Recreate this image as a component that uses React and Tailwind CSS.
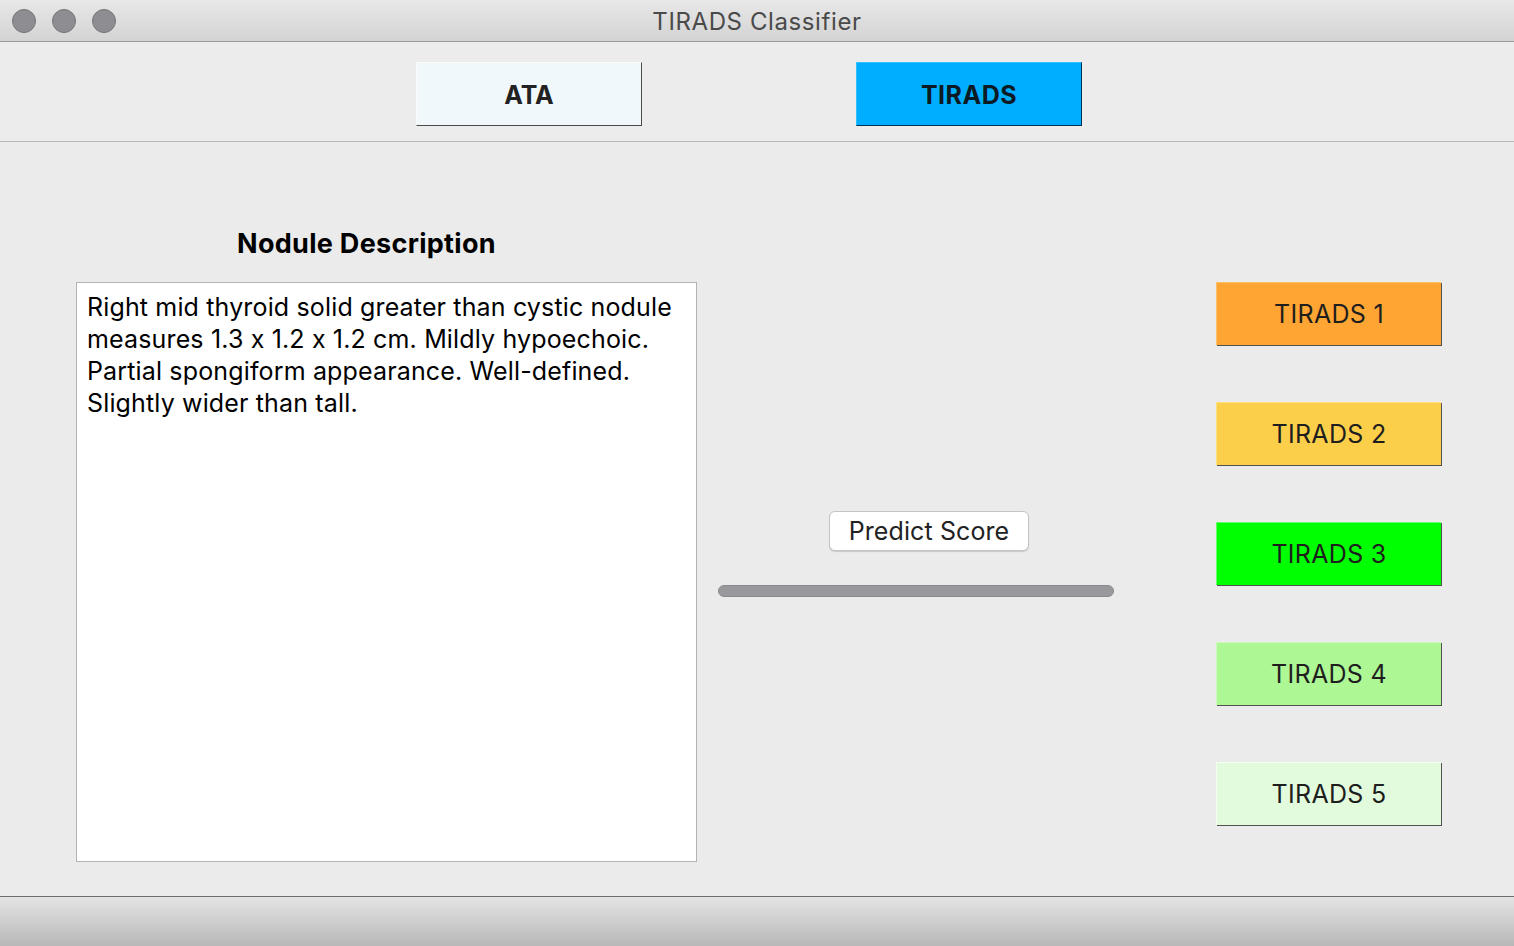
import React from "react";

const tirads = [
  { label: "TIRADS 1", bg: "bg-[#ffa533]", tl: "border-[#ffbf66]" },
  { label: "TIRADS 2", bg: "bg-[#fccf4a]", tl: "border-[#fde07f]" },
  { label: "TIRADS 3", bg: "bg-[#00ff00]", tl: "border-[#66ff66]" },
  { label: "TIRADS 4", bg: "bg-[#adf795]", tl: "border-[#cdfbbd]" },
  { label: "TIRADS 5", bg: "bg-[#e2fbdc]", tl: "border-[#f4fff0]" },
];

export default function App() {
  return (
    <div className="w-[1514px] h-[946px] flex flex-col bg-[#ebebeb] overflow-hidden [font-feature-settings:'calt'_0]" style={{ fontFamily: "Inter, Roboto, 'Noto Sans', sans-serif" }}>
      {/* Title bar */}
      <div className="h-[42px] shrink-0 flex items-center relative bg-gradient-to-b from-[#e8e8e8] to-[#d3d3d3] border-b border-[#9a9a9a]">
        <div className="flex items-center gap-[16px] pl-[12px]">
          <div className="w-[24px] h-[24px] rounded-full bg-[#8e8e92] border border-[#76767a]" />
          <div className="w-[24px] h-[24px] rounded-full bg-[#8e8e92] border border-[#76767a]" />
          <div className="w-[24px] h-[24px] rounded-full bg-[#8e8e92] border border-[#76767a]" />
        </div>
        <div className="absolute inset-0 flex items-center justify-center pt-[2px] text-[24px] tracking-[0.6px] text-[#4a4a4a] pointer-events-none">
          TIRADS Classifier
        </div>
      </div>

      {/* Tab bar */}
      <div className="h-[100px] shrink-0 flex items-start pt-[20px] border-b border-[#b8b8b8] bg-[#ececec]">
        <button className="ml-[416px] w-[226px] h-[64px] pt-[3px] bg-[#f0f8fc] border border-t-[#fafafa] border-l-[#fafafa] border-r-[#4a4a4a] border-b-[#4a4a4a] text-[25px] font-bold text-[#222]">
          ATA
        </button>
        <button className="ml-[214px] w-[226px] h-[64px] pt-[3px] bg-[#00aeff] border border-t-[#33c0ff] border-l-[#33c0ff] border-r-[#003050] border-b-[#003050] text-[25px] font-bold tracking-[0.5px] text-[#0c1a24]">
          TIRADS
        </button>
      </div>

      {/* Main */}
      <div className="flex-1 flex">
        {/* Left column */}
        <div className="ml-[76px] w-[621px] flex flex-col pt-[84px]">
          <div className="h-[36px] leading-[36px] pl-[161px] text-[27px] tracking-[0.3px] font-bold text-black whitespace-nowrap">Nodule Description</div>
          <div className="mt-[20px] h-[580px] bg-white border border-[#b3b3b3] px-[10px] pt-[8px] text-[25px] tracking-[0.15px] leading-[32px] text-black whitespace-nowrap">
            Right mid thyroid solid greater than cystic nodule<br />
            measures 1.3 x 1.2 x 1.2 cm. Mildly hypoechoic.<br />
            Partial spongiform appearance. Well-defined.<br />
            Slightly wider than tall.
          </div>
        </div>

        {/* Middle column */}
        <div className="ml-[21px] w-[396px] flex flex-col pt-[369px]">
          <button className="ml-[111px] w-[200px] h-[40px] bg-white rounded-[6px] border border-[#c4c4c4] shadow-[0_1px_1px_rgba(0,0,0,0.15)] text-[25px] tracking-[0.1px] text-[#222] leading-none">
            Predict Score
          </button>
          <div className="mt-[34px] h-[12px] rounded-full bg-[#98989d] border border-[#8a8a8e]" />
        </div>

        {/* Right column */}
        <div className="ml-[102px] flex flex-col gap-[57px] pt-[140px]">
          {tirads.map((t) => (
            <button
              key={t.label}
              className={`w-[225px] h-[63px] pt-[2px] ${t.bg} border ${t.tl} border-r-0 border-b-0 shadow-[1px_1px_0_0_rgba(0,0,0,0.65)] text-[25px] tracking-[0.3px] text-[#1e1e1e]`}
            >
              {t.label}
            </button>
          ))}
        </div>
      </div>

      {/* Bottom bar */}
      <div className="h-[50px] shrink-0 border-t border-[#6e6e6e] bg-gradient-to-b from-[#e4e4e4] to-[#b8b8b8]" />
    </div>
  );
}
